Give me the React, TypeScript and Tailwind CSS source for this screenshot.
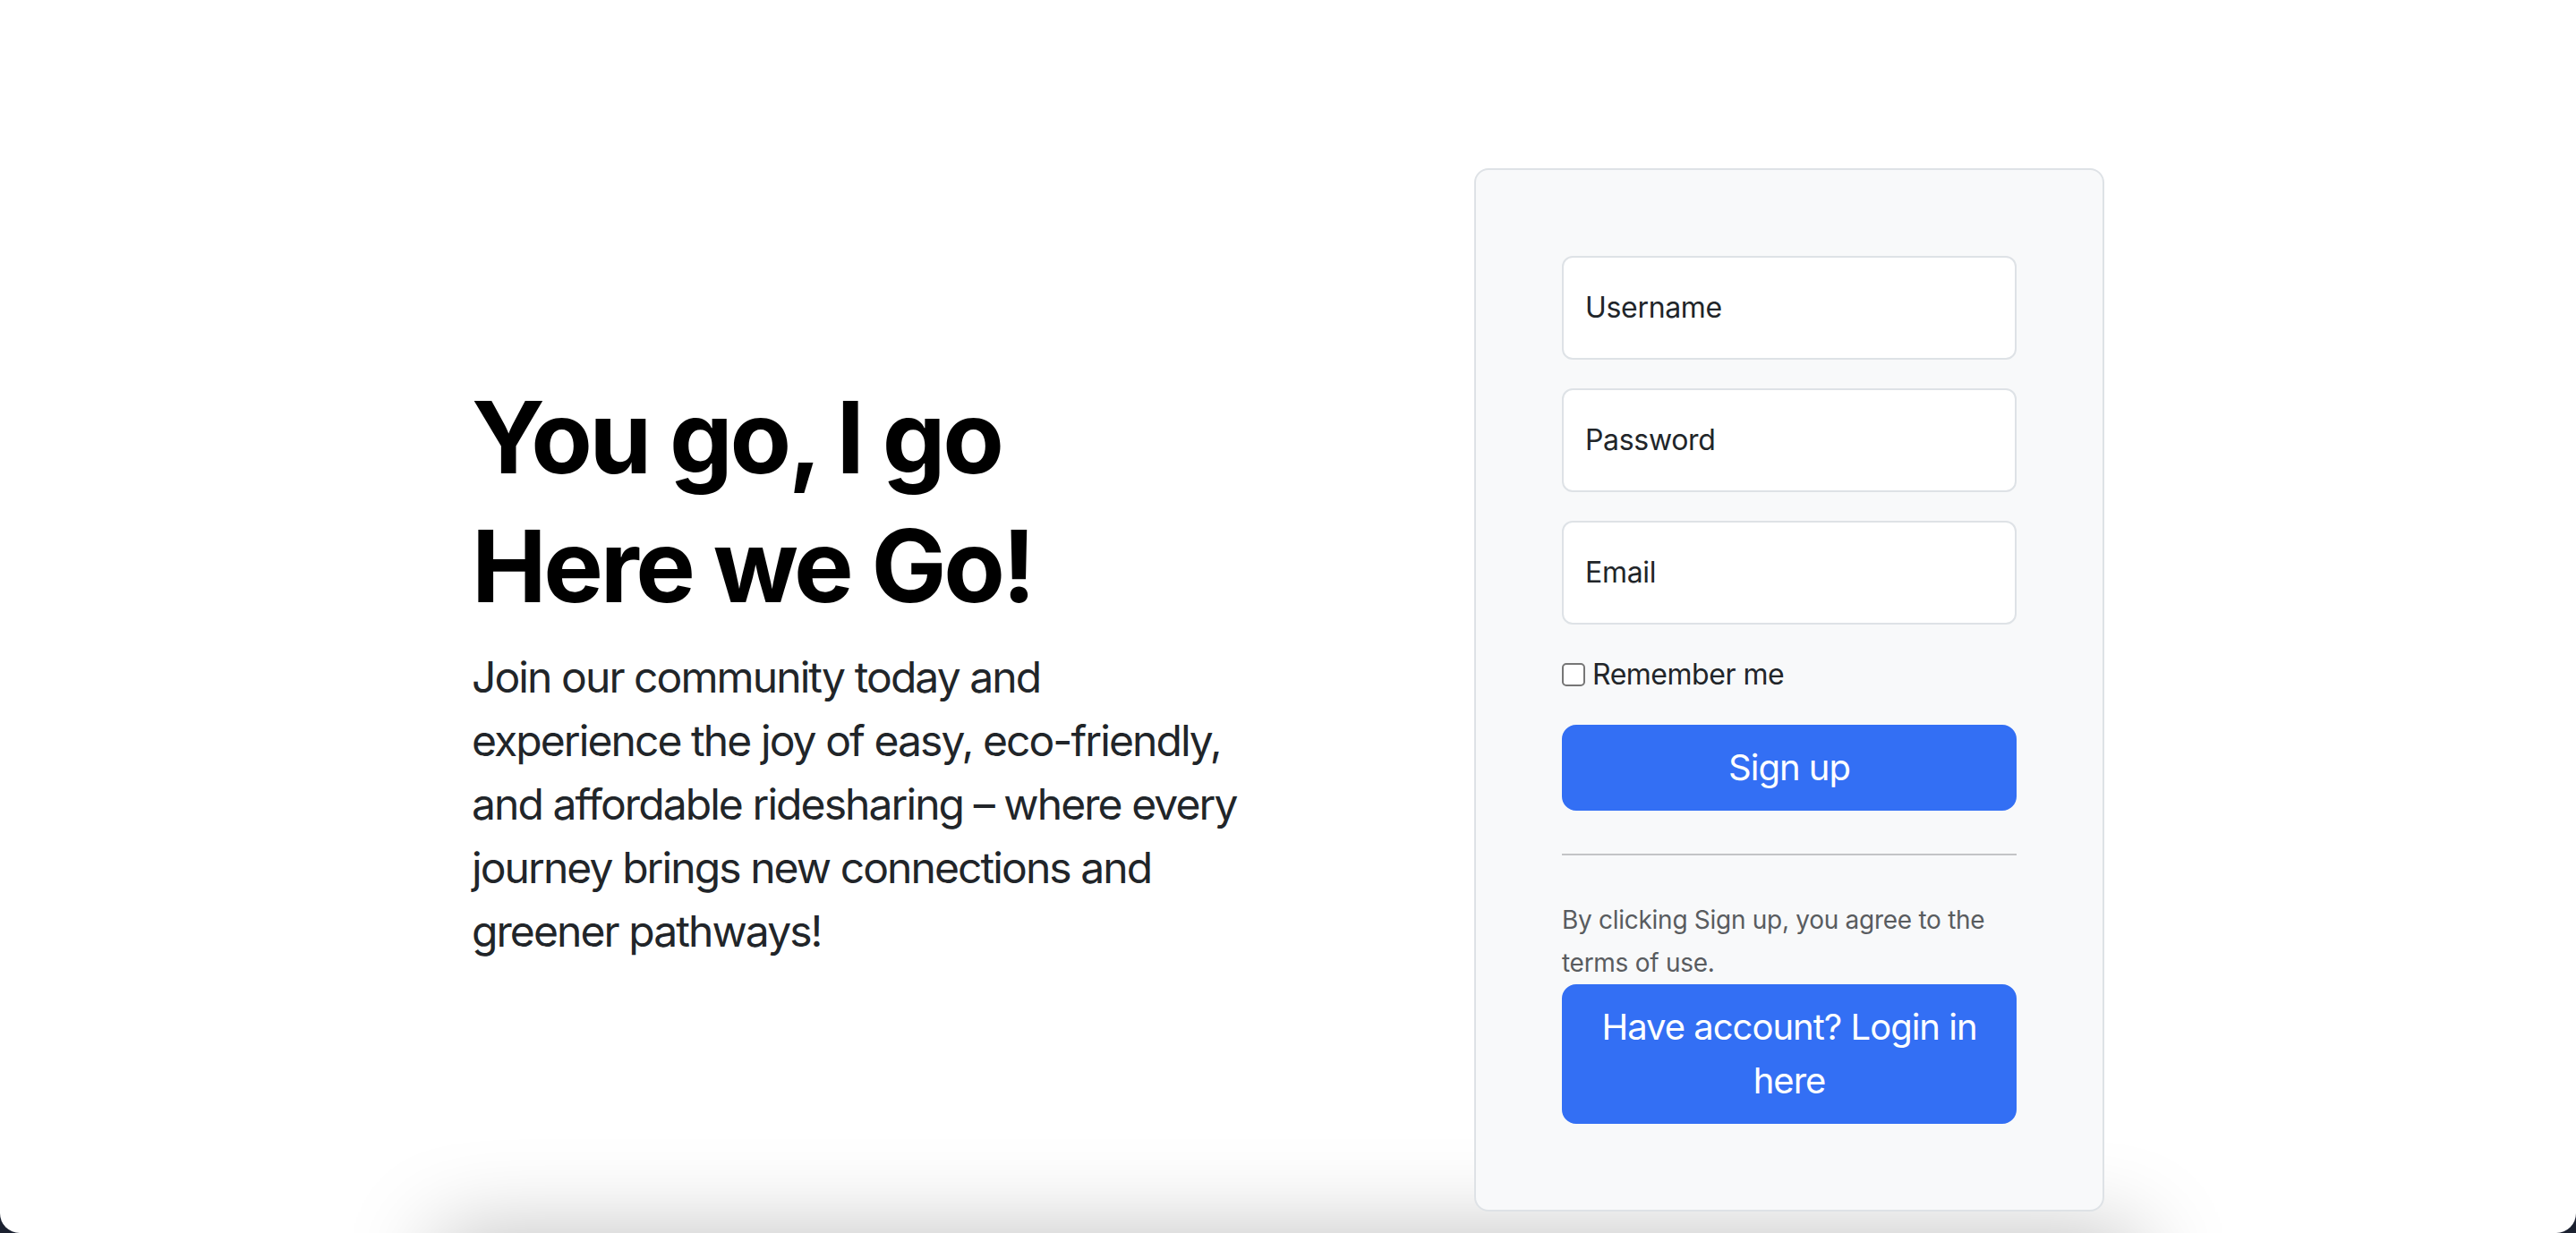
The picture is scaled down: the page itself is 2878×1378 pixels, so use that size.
import type { ReactNode } from 'react'

function FloatingField({ label }: { label: string }) {
  return (
    <div className="mb-[32px]">
      <div className="flex h-[116px] items-center rounded-[12px] border-2 border-[#dee2e6] bg-white px-[24px]">
        <span className="text-[32px] leading-[48px] tracking-[-0.01em] text-[#212529]">{label}</span>
      </div>
    </div>
  )
}

function PrimaryButton({ children }: { children: ReactNode }) {
  return (
    <button
      type="button"
      className="w-full rounded-[16px] border-2 border-[#336ff4] bg-[#336ff4] px-[30px] py-[16px] text-center text-[40px] leading-[60px] tracking-[-0.025em] text-white"
    >
      {children}
    </button>
  )
}

export default function App() {
  return (
    <div className="min-h-screen bg-[#1b2130] font-['Inter','Liberation_Sans',sans-serif]">
      <div className="h-[1378px] overflow-hidden rounded-b-[22px] bg-white">

        {/* hero + form */}
        <div className="mx-auto flex w-[1824px] items-center gap-[96px] pt-[188px]">

          {/* left: heading + pitch */}
          <div className="w-[1024px] pb-[50px]">
            <h1 className="mb-[17px] text-[112px] font-bold leading-[144px] tracking-[-0.03em] text-black">
              You go, I go
              <br />
              Here we Go!
            </h1>
            <p className="whitespace-nowrap text-[48px] leading-[71px] tracking-[-0.04em] text-[#212529]">
              Join our community today and
              <br />
              experience the joy of easy, eco-friendly,
              <br />
              and affordable ridesharing – where every
              <br />
              journey brings new connections and
              <br />
              greener pathways!
            </p>
          </div>

          {/* right: sign up card */}
          <div className="w-[704px] shrink-0 rounded-[16px] border-2 border-[#dee2e6] bg-[#f8f9fa] p-[96px]">
            <FloatingField label="Username" />
            <FloatingField label="Password" />
            <FloatingField label="Email" />

            <div className="mb-[32px] flex h-[48px] items-center gap-[8px]">
              <span className="block size-[26px] rounded-[5px] border-2 border-[#767676] bg-white" />
              <span className="text-[32px] leading-[48px] tracking-[-0.015em] text-[#212529]">Remember me</span>
            </div>

            <PrimaryButton>Sign up</PrimaryButton>

            <hr className="my-[48px] border-t-2 border-[#c3c4c6]" />

            <div className="text-[28px] leading-[48px] tracking-[-0.01em] text-[#595c5f]">
              By clicking Sign up, you agree to the terms of use.
            </div>

            <PrimaryButton>Have account? Login in here</PrimaryButton>
          </div>
        </div>

        {/* next section peeking from below */}
        <div className="mx-auto mt-[24px] h-[300px] w-[1900px] bg-white shadow-[0_0_100px_rgba(0,0,0,0.25)]" />
      </div>
    </div>
  )
}
